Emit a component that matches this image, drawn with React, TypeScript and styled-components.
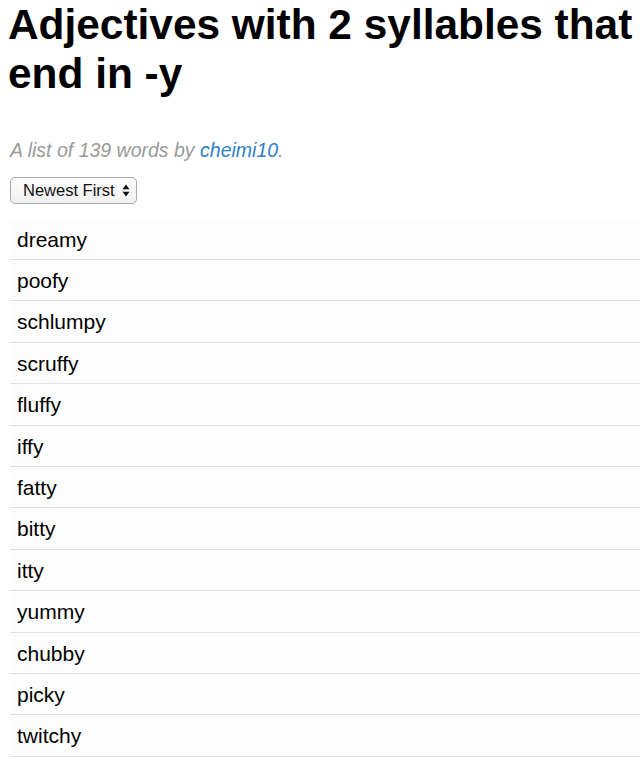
import React from "react";
import styled, { createGlobalStyle } from "styled-components";

const Global = createGlobalStyle`
  html, body { background: #fff; }
  body {
    margin: 0 0 0 8px;
    font-family: "Liberation Sans", Arial, Helvetica, sans-serif;
    color: #000;
  }
`;

const Title = styled.h1`
  margin: 0;
  font-size: 42.4px;
  line-height: 49px;
  font-weight: bold;
`;

const Byline = styled.p`
  margin: 41px 0 0 2px;
  font-size: 19.5px;
  line-height: 22px;
  font-style: italic;
  color: #9a9a9a;
`;

const Author = styled.a`
  color: #2f7fc9;
  text-decoration: none;
`;

const SortSelect = styled.div`
  margin: 16px 0 0 2px;
  display: inline-flex;
  align-items: center;
  gap: 7px;
  height: 27px;
  padding: 0 6px 0 12px;
  border: 1px solid #a9a9a9;
  border-radius: 5px;
  background: linear-gradient(#fdfdfd, #f0f0f0);
  font-size: 16.5px;
  color: #111;
  box-sizing: border-box;
`;

const Arrows = styled.svg`
  width: 8px;
  height: 13px;
`;

const List = styled.ul`
  list-style: none;
  margin: 14.6px 0 0 2px;
  padding: 0;
`;

const Item = styled.li`
  height: 41.4px;
  box-sizing: border-box;
  padding: 9px 0 0 7px;
  font-size: 21px;
  line-height: 24px;
  background: #fdfdfd;
  border-bottom: 1px solid #e1e1e1;
`;

const words = [
  "dreamy",
  "poofy",
  "schlumpy",
  "scruffy",
  "fluffy",
  "iffy",
  "fatty",
  "bitty",
  "itty",
  "yummy",
  "chubby",
  "picky",
  "twitchy",
];

export default function App() {
  return (
    <>
      <Global />
      <Title>Adjectives with 2 syllables that end in -y</Title>
      <Byline>
        A list of 139 words by <Author href="#">cheimi10</Author>.
      </Byline>
      <SortSelect>
        Newest First
        <Arrows viewBox="0 0 8 13">
          <path d="M4 0.5 L7.5 5.2 L0.5 5.2 Z" fill="#111" />
          <path d="M4 12.5 L7.5 7.8 L0.5 7.8 Z" fill="#111" />
        </Arrows>
      </SortSelect>
      <List>
        {words.map((w) => (
          <Item key={w}>{w}</Item>
        ))}
      </List>
    </>
  );
}
